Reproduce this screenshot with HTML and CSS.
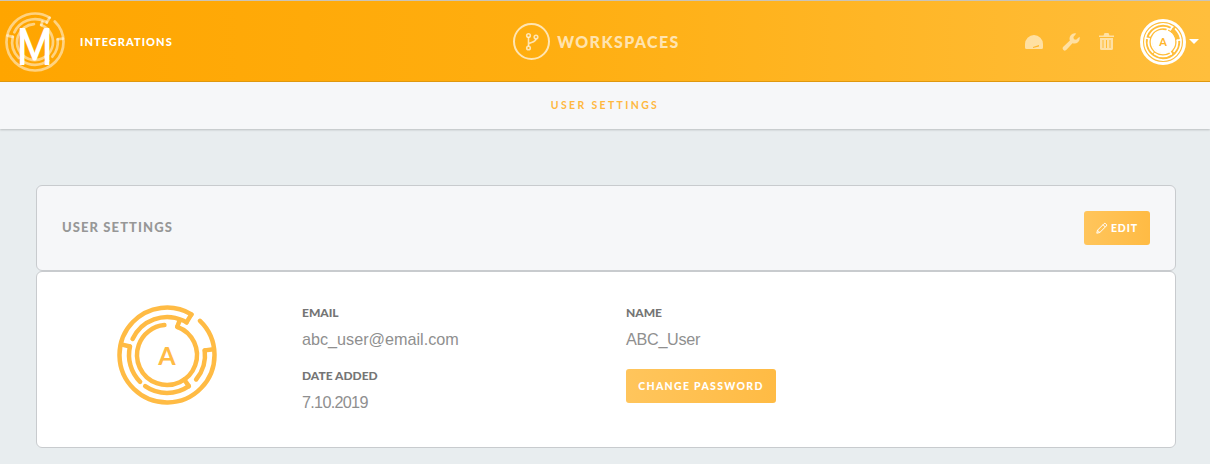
FILE: index.html
```html
<!DOCTYPE html>
<html lang="en">
<head>
    <meta charset="UTF-8">
    <title>User Settings</title>
    <link rel="stylesheet" href="styles.css">
</head>
<body>
    <svg class="defs" width="0" height="0">
        <symbol id="maze" viewBox="0 0 100 100">
            <g fill="none" stroke="currentColor" stroke-width="4.500" stroke-linecap="round">
                <circle cx="50" cy="50" r="47.500" pathLength="360" stroke-dasharray="347 360" transform="rotate(-46 50 50)"/>
                <circle cx="50" cy="50" r="38" pathLength="360" stroke-dasharray="96 360" transform="rotate(205 50 50)"/>
                <circle cx="50" cy="50" r="38" pathLength="360" stroke-dasharray="47 360" transform="rotate(-7 50 50)"/>
                <circle cx="50" cy="50" r="38" pathLength="360" stroke-dasharray="70 360" transform="rotate(55 50 50)"/>
                <circle cx="50" cy="50" r="38" pathLength="360" stroke-dasharray="58 360" transform="rotate(135 50 50)"/>
                <circle cx="50" cy="50" r="30" pathLength="360" stroke-dasharray="335 360" transform="rotate(-70 50 50)"/>
                <line x1="50" y1="3" x2="50" y2="12" transform="rotate(283 50 50)"/>
                <line x1="50" y1="3" x2="50" y2="12" transform="rotate(83 50 50)"/>
                <line x1="50" y1="3" x2="50" y2="12" transform="rotate(31 50 50)"/>
                <line x1="50" y1="14" x2="50" y2="20" transform="rotate(20 50 50)"/>
                <line x1="50" y1="12" x2="50" y2="20" transform="rotate(145 50 50)"/>
            </g>
        </symbol>
    </svg>

    <header class="topbar">
        <div class="topbar-left">
            <div class="logo">
                <svg class="logo-maze"><use href="#maze"/></svg>
                <span class="logo-letter">M</span>
            </div>
            <span class="topbar-link">INTEGRATIONS</span>
        </div>

        <div class="topbar-center">
            <span class="branch-circle">
                <svg width="20" height="20" viewBox="0 0 20 20" fill="none" stroke="currentColor" stroke-width="1.600">
                    <circle cx="6.500" cy="3.500" r="1.800"/>
                    <circle cx="6.500" cy="16" r="1.800"/>
                    <circle cx="14" cy="5" r="1.800"/>
                    <path d="M6.500 5.300v8.900M6.500 12.500c0-2.500 7.500-1.500 7.500-5.700"/>
                </svg>
            </span>
            <span class="topbar-title">WORKSPACES</span>
        </div>

        <div class="topbar-right">
            <svg class="tool-icon" width="18" height="14" viewBox="0 0 18 14">
                <path d="M0 12.500V9a9 9 0 0 1 18 0v3.500a1.500 1.500 0 0 1-1.500 1.500h-15A1.500 1.500 0 0 1 0 12.500z"/>
                <path d="M8 12l6-2v1.500l-6 1.500z" fill="#ffb52b"/>
            </svg>
            <svg class="tool-icon" width="18" height="18" viewBox="0 0 18 18">
                <path d="M17.500 3.800a5.300 5.300 0 0 1-7 6.400l-6 6.600a2 2 0 0 1-3.200-3l6.600-6.300a5.300 5.300 0 0 1 6.400-7L11.400 4l.5 2.300 2.200.5z"/>
            </svg>
            <svg class="tool-icon" width="15" height="17" viewBox="0 0 15 17">
                <path d="M0 2.500h4.500L5.500 0h4l1 2.500H15V4H0z"/>
                <path fill-rule="evenodd" d="M1 5h13v10.500a1.500 1.500 0 0 1-1.500 1.500h-10A1.500 1.500 0 0 1 1 15.500zM3.500 7v8h1V7zM7 7v8h1V7zM10.500 7v8h1V7z"/>
            </svg>
            <div class="user-menu">
                <div class="avatar">
                    <svg class="avatar-maze"><use href="#maze"/></svg>
                    <span class="avatar-letter">A</span>
                </div>
                <span class="caret"></span>
            </div>
        </div>
    </header>

    <nav class="subbar">USER SETTINGS</nav>

    <main class="content">
        <section class="card card-head">
            <h2>USER SETTINGS</h2>
            <button class="btn btn-edit">
                <svg width="12" height="12" viewBox="0 0 12 12" fill="none" stroke="currentColor">
                    <path d="M.8 11.200l.7-3 6.500-6.500a1.200 1.200 0 0 1 1.700 0l.6.600a1.200 1.200 0 0 1 0 1.700L3.800 10.500zM1.500 8.200l2.300 2.300M7 2.700l2.300 2.300"/>
                </svg>
                EDIT
            </button>
        </section>

        <section class="card card-body">
            <div class="profile-pic">
                <svg class="profile-maze"><use href="#maze"/></svg>
                <span class="profile-letter">A</span>
            </div>
            <div class="info-col info-col-email">
                <h4>EMAIL</h4>
                <p>abc_user@email.com</p>
                <h4>DATE ADDED</h4>
                <p class="date-value">7.10.2019</p>
            </div>
            <div class="info-col">
                <h4>NAME</h4>
                <p class="name-value">ABC_User</p>
                <button class="btn btn-password">CHANGE PASSWORD</button>
            </div>
        </section>
    </main>
</body>
</html>
```

FILE: styles.css
```css
* {
    box-sizing: border-box;
}

html, body {
    margin: 0;
    height: 100%;
    overflow: hidden;
}

body {
    font-family: 'Lato', sans-serif;
    background-color: #e8edef;
}

.defs {
    display: block;
    height: 0;
}

/* top bar */
.topbar {
    display: grid;
    grid-template-columns: 1fr auto 1fr;
    align-items: center;
    height: 82px;
    padding: 1px 11px 0 5px;
    background: linear-gradient(90deg, #ffa500 0%, #ffae10 45%, #ffbe3c 100%);
    border-top: 1px solid #c9c4b8;
    border-bottom: 1px solid #e29a10;
}

.topbar-left {
    display: flex;
    align-items: center;
    gap: 15px;
}

.logo {
    position: relative;
    width: 60px;
    height: 60px;
    color: rgba(255, 255, 255, 0.5);
}

.logo-maze {
    display: block;
    width: 60px;
    height: 60px;
}

.logo-letter {
    position: absolute;
    top: 14px;
    left: 12px;
    font-size: 52px;
    line-height: 38px;
    font-weight: 700;
    color: #fff;
    transform: scaleX(0.72);
    transform-origin: left center;
}

.topbar-link {
    font-size: 11px;
    font-weight: 900;
    letter-spacing: 1.050px;
    color: #fff;
}

.topbar-center {
    display: flex;
    align-items: center;
    gap: 7px;
    padding-right: 11px;
    color: rgba(255, 255, 255, 0.68);
}

.branch-circle {
    display: flex;
    align-items: center;
    justify-content: center;
    width: 37px;
    height: 37px;
    border: 2px solid currentColor;
    border-radius: 50%;
}

.topbar-title {
    font-size: 16px;
    font-weight: 900;
    letter-spacing: 1.400px;
}

.topbar-right {
    display: flex;
    align-items: center;
    justify-content: flex-end;
    gap: 19px;
}

.tool-icon {
    fill: rgba(255, 255, 255, 0.55);
}

.user-menu {
    display: flex;
    align-items: center;
    gap: 3px;
    margin-left: 7px;
}

.avatar {
    position: relative;
    display: flex;
    align-items: center;
    justify-content: center;
    width: 46px;
    height: 46px;
    border-radius: 50%;
    border: 3px solid #fff;
    color: #fff;
}

.avatar-maze {
    position: absolute;
    top: 1px;
    left: 1px;
    width: 38px;
    height: 38px;
}

.avatar-letter {
    position: relative;
    width: 23px;
    height: 23px;
    border-radius: 50%;
    background-color: #fff;
    color: #ffb52b;
    font-size: 11px;
    font-weight: 700;
    line-height: 23px;
    text-align: center;
}

.caret {
    border-left: 5px solid transparent;
    border-right: 5px solid transparent;
    border-top: 5px solid #fff;
}

/* sub navigation */
.subbar {
    height: 47px;
    padding-top: 17px;
    background-color: #f6f7f9;
    box-shadow: 0 1px 2px rgba(0, 0, 0, 0.2);
    color: #ffb83f;
    font-size: 10.500px;
    font-weight: 700;
    letter-spacing: 2.350px;
    text-align: center;
}

/* cards */
.content {
    padding: 56px 34px 0 36px;
}

.card {
    display: flex;
    background-color: #fff;
    border: 1px solid #c8cbce;
    border-radius: 6px;
}

.card-head {
    align-items: center;
    justify-content: space-between;
    height: 86px;
    padding: 0 25px;
    background-color: #f6f7f9;
}

.card-head h2 {
    margin: 0 0 2px;
    font-size: 13px;
    font-weight: 900;
    letter-spacing: 1.100px;
    color: #979797;
}

.card-body {
    height: 177px;
    padding: 33px 0 0 80px;
}

.profile-pic {
    position: relative;
    display: flex;
    align-items: center;
    justify-content: center;
    width: 100px;
    height: 100px;
    color: #ffbb44;
}

.profile-maze {
    position: absolute;
    top: 0;
    left: 0;
    width: 100px;
    height: 100px;
}

.profile-letter {
    font-size: 25px;
    font-weight: 700;
}

.info-col {
    display: flex;
    flex-direction: column;
    align-items: flex-start;
    margin-left: 85px;
}

.info-col-email {
    width: 324px;
}

.info-col + .info-col {
    margin-left: 0;
}

.info-col h4 {
    margin: 0;
    font-size: 12px;
    line-height: 16px;
    font-weight: 900;
    color: #757575;
}

.info-col p {
    margin: 7px 0 18px;
    font-family: 'Liberation Sans', sans-serif;
    font-size: 16.200px;
    line-height: 22px;
    color: #8f8f8f;
}

.info-col .date-value {
    letter-spacing: -0.7px;
}

.info-col .name-value {
    letter-spacing: -0.3px;
}

.btn {
    border: none;
    border-radius: 3px;
    background: linear-gradient(90deg, #ffc55c, #ffbb44);
    color: #fff;
    font-family: 'Lato', sans-serif;
    font-size: 10.500px;
    font-weight: 900;
    letter-spacing: 0.9px;
}

.btn-edit {
    display: flex;
    align-items: center;
    justify-content: center;
    gap: 3px;
    width: 66px;
    height: 34px;
    padding: 0;
}

.btn-password {
    width: 150px;
    height: 34px;
    margin-top: 1px;
    padding: 0;
    letter-spacing: 1.300px;
}
```
